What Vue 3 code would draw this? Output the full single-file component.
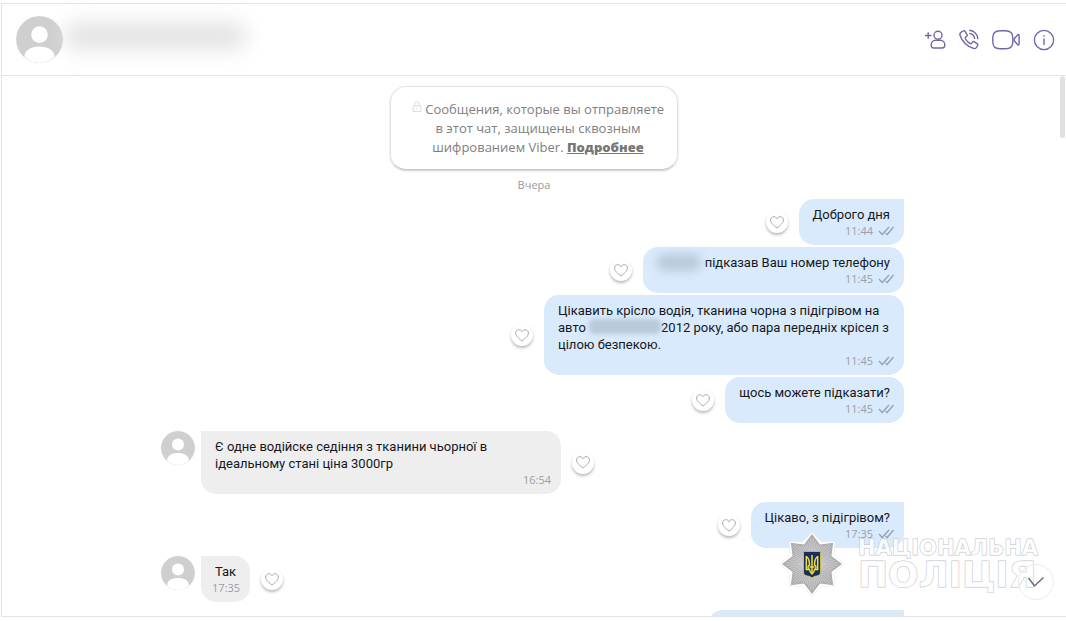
<script setup>
import { ref } from 'vue'

const messages = ref([
  { id: 1, out: true, first: true, time: '11:44', parts: ['Доброго дня'] },
  { id: 2, out: true, time: '11:45', parts: [{ hidden: 'name' }, ' підказав Ваш номер телефону'] },
  {
    id: 3,
    out: true,
    time: '11:45',
    parts: ['Цікавить крісло водія, тканина чорна з підігрівом на авто ', { hidden: 'car' }, '2012 року, або пара передніх крісел з цілою безпекою.'],
  },
  { id: 4, out: true, time: '11:45', parts: ['щось можете підказати?'] },
  { id: 5, out: false, first: true, time: '16:54', parts: ['Є одне водійске седіння з тканини чьорної в ідеальному стані ціна 3000гр'] },
  { id: 6, out: true, first: true, time: '17:35', parts: ['Цікаво, з підігрівом?'] },
  { id: 7, out: false, first: true, time: '17:35', parts: ['Так'] },
  { id: 8, out: true, first: true, parts: [{ hidden: 'pending' }] },
])

const polar = (r, a) => `${(32 + r * Math.sin(a)).toFixed(1)},${(32 - r * Math.cos(a)).toFixed(1)}`
const star = (outer, inner) =>
  Array.from({ length: 16 }, (_, i) => polar(i % 2 ? inner : outer, (i * Math.PI) / 8)).join(' ')
const starEdge = star(32, 24)
const starBody = star(30, 21)
const rays = Array.from({ length: 64 }, (_, i) => {
  const a = ((i + 0.5) * Math.PI) / 32
  const t = Math.abs(((i + 0.5) % 8) - 4) / 4
  return `M32,32L${polar(20 + 8 * t * t, a)}`
}).join('')
</script>

<template>
  <div class="window">
    <header class="header">
      <svg class="avatar avatar-large" viewBox="0 0 34 34" aria-hidden="true">
        <circle cx="17" cy="17" r="17" fill="#cfcfcf" />
        <circle cx="17" cy="13.500" r="6" fill="#fff" />
        <path d="M6 29.200C6.500 24.500 11 22 17 22s10.500 2.500 11 7.200C25 32.500 21 34 17 34S9 32.500 6 29.200Z" fill="#fff" />
      </svg>
      <span class="contact-blur"></span>
      <nav class="actions">
        <button type="button" aria-label="Додати учасника">
          <svg width="22" height="22" viewBox="0 0 22 22">
            <circle cx="14" cy="6.200" r="4" />
            <path d="M11.500 11.300h5c2.500 0 4.300 2 4.300 4.700 0 2-.8 3-2.600 3H9.800c-1.800 0-2.600-1-2.600-3 0-2.700 1.800-4.700 4.300-4.700ZM1 6.500h6.500M4.200 3.300v6.500" />
          </svg>
        </button>
        <button type="button" aria-label="Зателефонувати">
          <svg width="20" height="22" viewBox="0 0 20 22">
            <path d="M2.200 3.200 4 2c.7-.5 1.500-.3 2 .4l2 3c.5.700.3 1.400-.3 1.900l-1 .8c-.6.500-.6 1-.3 1.700 1 2 2.600 3.700 4.600 4.700.7.400 1.200.2 1.700-.4l.8-1c.5-.6 1.200-.7 1.900-.2l2.800 2c.7.500.8 1.300.3 2l-1.200 1.700c-.7.900-1.700 1.200-2.800.8C8.500 17.500 3.200 12.500 1 6.200.6 5 1 4 2.200 3.200Z" />
            <path d="M10.200 1.200c5 .1 8.500 4 8.600 9M10.200 4.400c3.200.2 5.200 2.400 5.400 5.600" />
          </svg>
        </button>
        <button type="button" aria-label="Відеодзвінок">
          <svg width="28" height="22" viewBox="0 0 28 22">
            <path d="M8 1.700h5.500c5.200 0 7.300 2 7.300 7v4c0 5-2.100 7-7.300 7H8c-5.200 0-7.200-2-7.200-7v-4c0-5 2-7 7.200-7Z" />
            <path d="M22.500 9.500 25.500 6c1-.9 1.600-.6 1.600.6v8.200c0 1.200-.6 1.500-1.600.6L22.500 12c-.7-.8-.7-1.700 0-2.500Z" />
          </svg>
        </button>
        <button type="button" aria-label="Інформація">
          <svg width="22" height="22" viewBox="0 0 22 22">
            <circle cx="11" cy="11" r="9.600" />
            <path d="M11 9.500v6.500M11 6v1.600" />
          </svg>
        </button>
      </nav>
    </header>

    <main class="chat">
      <section class="notice">
        <p>
          <svg class="lock" width="10" height="11" viewBox="0 0 10 11" aria-hidden="true">
            <path d="M1 5h8v5.500H1ZM2.800 5V3a2.200 2.200 0 0 1 4.400 0v2M5 7v1.500" />
          </svg>
          Сообщения, которые вы отправляете в&nbsp;этот чат, защищены сквозным шифрованием Viber. <a href="#">Подробнее</a>
        </p>
      </section>
      <div class="date">Вчера</div>

      <ol class="messages">
        <li v-for="m in messages" :key="m.id" class="row" :class="{ out: m.out, first: m.first }">
          <svg v-if="!m.out" class="avatar" viewBox="0 0 34 34" aria-hidden="true">
            <circle cx="17" cy="17" r="17" fill="#cfcfcf" />
            <circle cx="17" cy="13.500" r="6" fill="#fff" />
            <path d="M6 29.200C6.500 24.500 11 22 17 22s10.500 2.500 11 7.200C25 32.500 21 34 17 34S9 32.500 6 29.200Z" fill="#fff" />
          </svg>
          <div class="bubble">
            <p>
              <template v-for="(part, i) in m.parts" :key="i">
                <span v-if="part.hidden" class="redacted" :class="part.hidden"></span>
                <template v-else>{{ part }}</template>
              </template>
            </p>
            <div v-if="m.time" class="meta">
              <time>{{ m.time }}</time>
              <svg v-if="m.out" width="16" height="10" viewBox="0 0 16 10" aria-hidden="true">
                <path d="m1 5 3.200 3.500L11 1M7.500 7l1.700 1.500L15.500 1" />
              </svg>
            </div>
          </div>
          <button v-if="m.time" class="like" type="button" aria-label="Подобається">
            <svg width="14" height="13" viewBox="0 0 14 13">
              <path d="M7 12C4 9.700.6 7.200.6 4 .6 2 2 .7 3.800.7 5.200.7 6.400 1.400 7 2.700 7.600 1.400 8.800.7 10.200.7c1.800 0 3.200 1.300 3.200 3.300 0 3.200-3.400 5.700-6.400 8Z" />
            </svg>
          </button>
        </li>
      </ol>

      <div class="scrollbar"></div>
      <div class="watermark">
        <svg class="badge" width="64" height="64" viewBox="0 0 64 64" aria-hidden="true">
          <polygon :points="starEdge" fill="#fff" stroke="#e2e4e6" stroke-width=".6" />
          <polygon :points="starBody" fill="#aeaeb0" />
          <path :d="rays" stroke="#dededf" stroke-width=".6" />
          <path d="M23.500 19.500h17V40c0 2.500-1.500 3.500-4 4-2 .3-3.500.8-4.500 2-1-1.200-2.500-1.700-4.500-2-2.500-.5-4-1.500-4-4Z" fill="#17305c" stroke="#d8c84a" stroke-width=".8" />
          <path d="M26.300 24v13.500h3.200c.2 2 1 3.300 2.500 4.500 1.500-1.200 2.300-2.500 2.500-4.500h3.200V24M32 23v18M26.500 24.500c2.500 2 3 5 3 8.500-2 .8-2 3.500 0 4.500M37.500 24.500c-2.500 2-3 5-3 8.500 2 .8 2 3.500 0 4.500M29.500 35h5" fill="none" stroke="#f0dc35" stroke-width="1.500" />
        </svg>
        <div class="wordmark"><span>НАЦІОНАЛЬНА</span><strong>ПОЛІЦІЯ</strong></div>
      </div>
      <button class="jump" type="button" aria-label="До останніх повідомлень">
        <svg width="18" height="12" viewBox="0 0 18 12"><path d="m1.500 2 6 8L16.500 1.500" /></svg>
      </button>
    </main>
  </div>
</template>

<style>
body {
  background: #fff;
}
</style>

<style scoped>
* {
  box-sizing: border-box;
}
.window {
  height: 100vh;
  padding: 3px 0 4px 1px;
  display: flex;
  flex-direction: column;
  font-family: "Open Sans", "Noto Sans", sans-serif;
  background: #fff;
}
.header {
  flex: none;
  height: 73px;
  display: flex;
  align-items: center;
  padding: 0 11px 0 14px;
  border: 1px solid #e4e4e6;
  border-right: 0;
}
button {
  padding: 0;
  border: 0;
  background: none;
  cursor: pointer;
}
svg {
  display: block;
  fill: none;
}
.avatar {
  flex: none;
  width: 34px;
  height: 34px;
  margin-right: 6px;
  border-radius: 50%;
  box-shadow: 0 0 1px #ddd;
}
.avatar-large {
  width: 47px;
  height: 47px;
  margin-right: 0;
}
.contact-blur {
  width: 184px;
  height: 28px;
  margin: 0 0 8px;
  border-radius: 14px;
  background: #e4e4e4;
  filter: blur(10px);
}
.actions {
  display: flex;
  align-items: center;
  gap: 13px;
  margin-left: auto;
}
.actions svg {
  stroke: #7465ab;
  stroke-width: 1.4;
}
.chat {
  position: relative;
  flex: 1;
  min-height: 0;
  overflow: hidden;
  border: 1px solid #e4e4e6;
  border-width: 0 0 1px 1px;
  padding-top: 10px;
}
.notice {
  width: 288px;
  margin: 0 auto;
  padding: 13px 8px 12px 16px;
  border: 1px solid #e2e2e2;
  border-bottom-color: #c8c8c8;
  border-radius: 16px;
  box-shadow: 0 1px 2px #ccc;
  text-align: center;
}
.notice p {
  margin: 0;
  font-size: 13px;
  line-height: 19px;
  color: #808080;
}
.notice a {
  font-weight: 800;
  color: #767676;
}
.lock {
  display: inline-block;
  vertical-align: 2px;
  stroke: #ddd;
}
.date {
  margin: 6px 0 5px;
  font-size: 11px;
  line-height: 18px;
  text-align: center;
  color: #999;
}
.messages {
  max-width: 746px;
  margin: 0 auto;
  padding: 0 3px 0 0;
  list-style: none;
}
.row {
  display: flex;
  align-items: flex-start;
  margin-top: 2px;
}
.row.first {
  margin-top: 8px;
}
.row.first:first-child {
  margin-top: 0;
}
.row.out {
  flex-direction: row-reverse;
}
.bubble {
  max-width: 360px;
  padding: 7px 14px 6px;
  border-radius: 15px;
  background: #eee;
}
.out .bubble {
  background: #d9eafc;
}
.first .bubble {
  border-top-left-radius: 0;
}
.out.first .bubble {
  border-radius: 15px 0 15px 15px;
}
.bubble p {
  margin: 0;
  font-family: Roboto, "Noto Sans", sans-serif;
  font-size: 13px;
  line-height: 17px;
  color: #15181c;
}
.meta {
  display: flex;
  justify-content: flex-end;
  align-items: center;
  gap: 5px;
  margin: 0 -4px;
  font-size: 11px;
  line-height: 16px;
  color: #999fa6;
}
.meta svg {
  stroke: #92a2b2;
  stroke-width: 1.3;
}
.redacted {
  display: inline-block;
  vertical-align: top;
  background: #b9cadb;
}
.name {
  width: 44px;
  height: 17px;
  border-radius: 8px;
  filter: blur(5px);
}
.car {
  width: 72px;
  height: 15px;
  border-radius: 5px;
  filter: blur(2px);
}
.pending {
  width: 168px;
  height: 17px;
  background: none;
}
.like {
  flex: none;
  align-self: center;
  display: grid;
  place-items: center;
  width: 22px;
  height: 22px;
  margin: 0 11px;
  border-radius: 50%;
  background: #fff;
  box-shadow: 0 2px 3px #bbb;
}
.like svg {
  stroke: #aaa;
  stroke-width: 1;
}
.scrollbar {
  position: absolute;
  top: 0;
  right: 1px;
  width: 5px;
  height: 62px;
  border-radius: 3px;
  background: #e1e1e1;
}
.jump {
  position: absolute;
  right: 12px;
  bottom: 16px;
  width: 36px;
  height: 36px;
  display: grid;
  place-items: center;
  border: 1px solid #ebebeb;
  border-radius: 50%;
}
.jump svg {
  stroke: #6d6685;
  stroke-width: 1.5;
}
.watermark {
  position: absolute;
  right: 28px;
  bottom: 20px;
  display: flex;
  align-items: center;
  gap: 14px;
  pointer-events: none;
}
.wordmark {
  display: flex;
  flex-direction: column;
  font-family: "DejaVu Sans", sans-serif;
  font-weight: 700;
  color: #ffffffdd;
  -webkit-text-stroke: 1px #bfc3c7;
  paint-order: stroke fill;
}
.wordmark span {
  font-size: 21px;
  line-height: 22px;
}
.wordmark strong {
  font-size: 36px;
  line-height: 32px;
  font-weight: 700;
}
</style>
